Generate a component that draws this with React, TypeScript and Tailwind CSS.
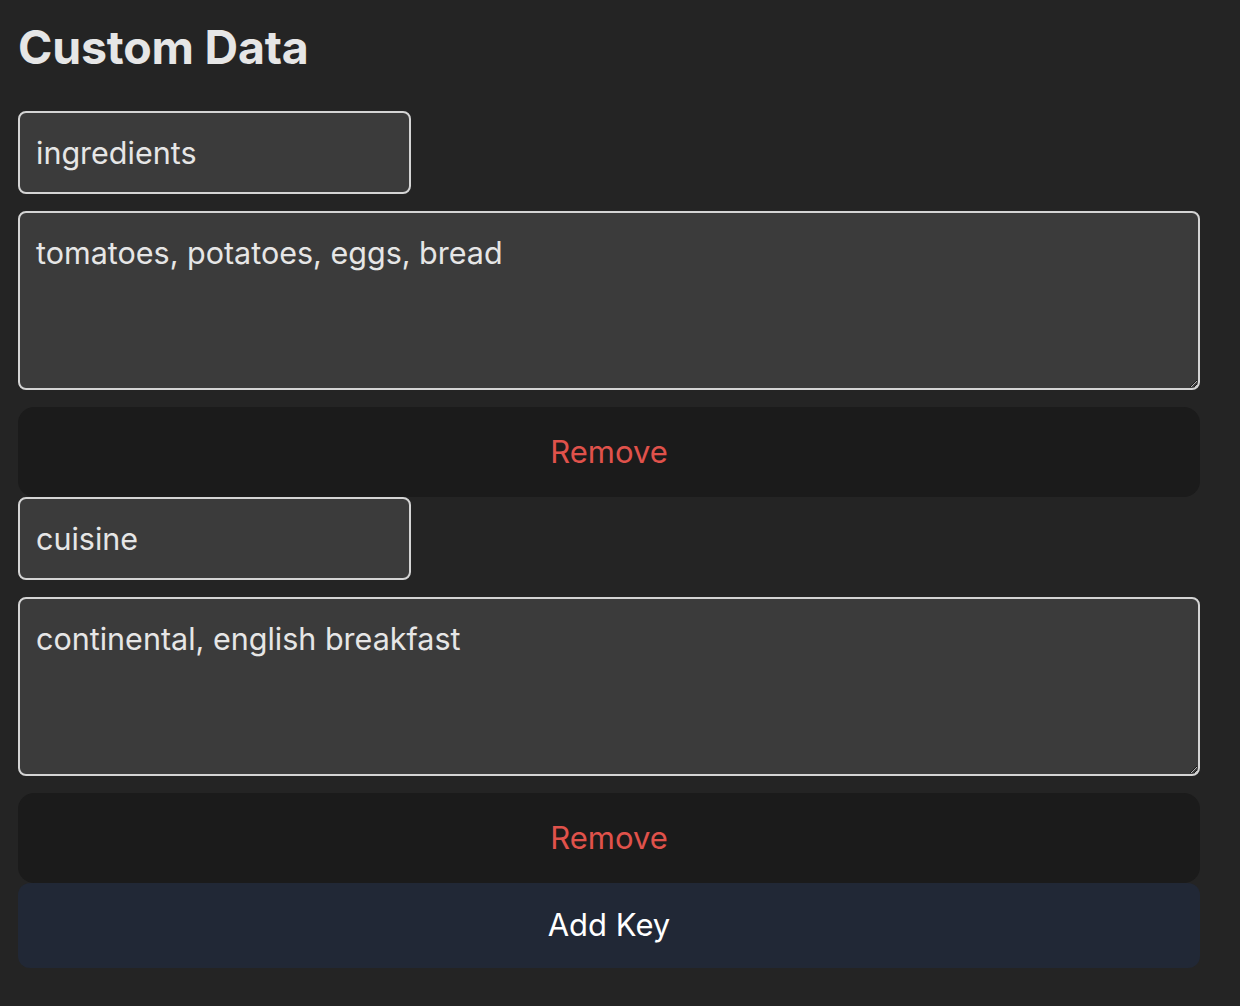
import React, { useState } from 'react';

type Entry = { id: number; key: string; value: string };

export default function App() {
  const [entries, setEntries] = useState<Entry[]>([
    { id: 1, key: 'ingredients', value: 'tomatoes, potatoes, eggs, bread' },
    { id: 2, key: 'cuisine', value: 'continental, english breakfast' },
  ]);

  const update = (id: number, field: 'key' | 'value', v: string) =>
    setEntries((list) => list.map((e) => (e.id === id ? { ...e, [field]: v } : e)));

  const remove = (id: number) => setEntries((list) => list.filter((e) => e.id !== id));

  const addKey = () =>
    setEntries((list) => [...list, { id: Date.now(), key: '', value: '' }]);

  return (
    <div className="min-h-screen bg-[#242424] text-[#e6e6e6] font-['Inter','Liberation_Sans',sans-serif]">
      <div className="w-[1182px] ml-[18px] pt-[17px]">
        <h1 className="text-[46.5px] leading-[60px] font-bold tracking-[-0.2px] mb-[34px]">Custom Data</h1>

        {entries.map((e) => (
          <div key={e.id} className="flex flex-col">
            <input
              value={e.key}
              onChange={(ev) => update(e.id, 'key', ev.target.value)}
              className="w-[393px] h-[83px] px-[16px] bg-[#3b3b3b] border-2 border-[#d4d4d4] rounded-[8px] text-[30.5px] text-[#e6e6e6] outline-none mb-[17px]"
            />
            <textarea
              value={e.value}
              onChange={(ev) => update(e.id, 'value', ev.target.value)}
              className="w-full h-[179px] px-[16px] pt-[22px] pb-[16px] bg-[#3b3b3b] border-2 border-[#d4d4d4] rounded-[8px] text-[30.5px] leading-[36px] text-[#e6e6e6] outline-none mb-[17px]"
            />
            <button
              onClick={() => remove(e.id)}
              className="w-full h-[90px] bg-[#1b1b1b] rounded-[16px] text-[31px] text-[#e0524b]"
            >
              Remove
            </button>
          </div>
        ))}

        <button
          onClick={addKey}
          className="w-full h-[85px] bg-[#212836] rounded-[12px] text-[31px] text-white"
        >
          Add Key
        </button>
      </div>
    </div>
  );
}
